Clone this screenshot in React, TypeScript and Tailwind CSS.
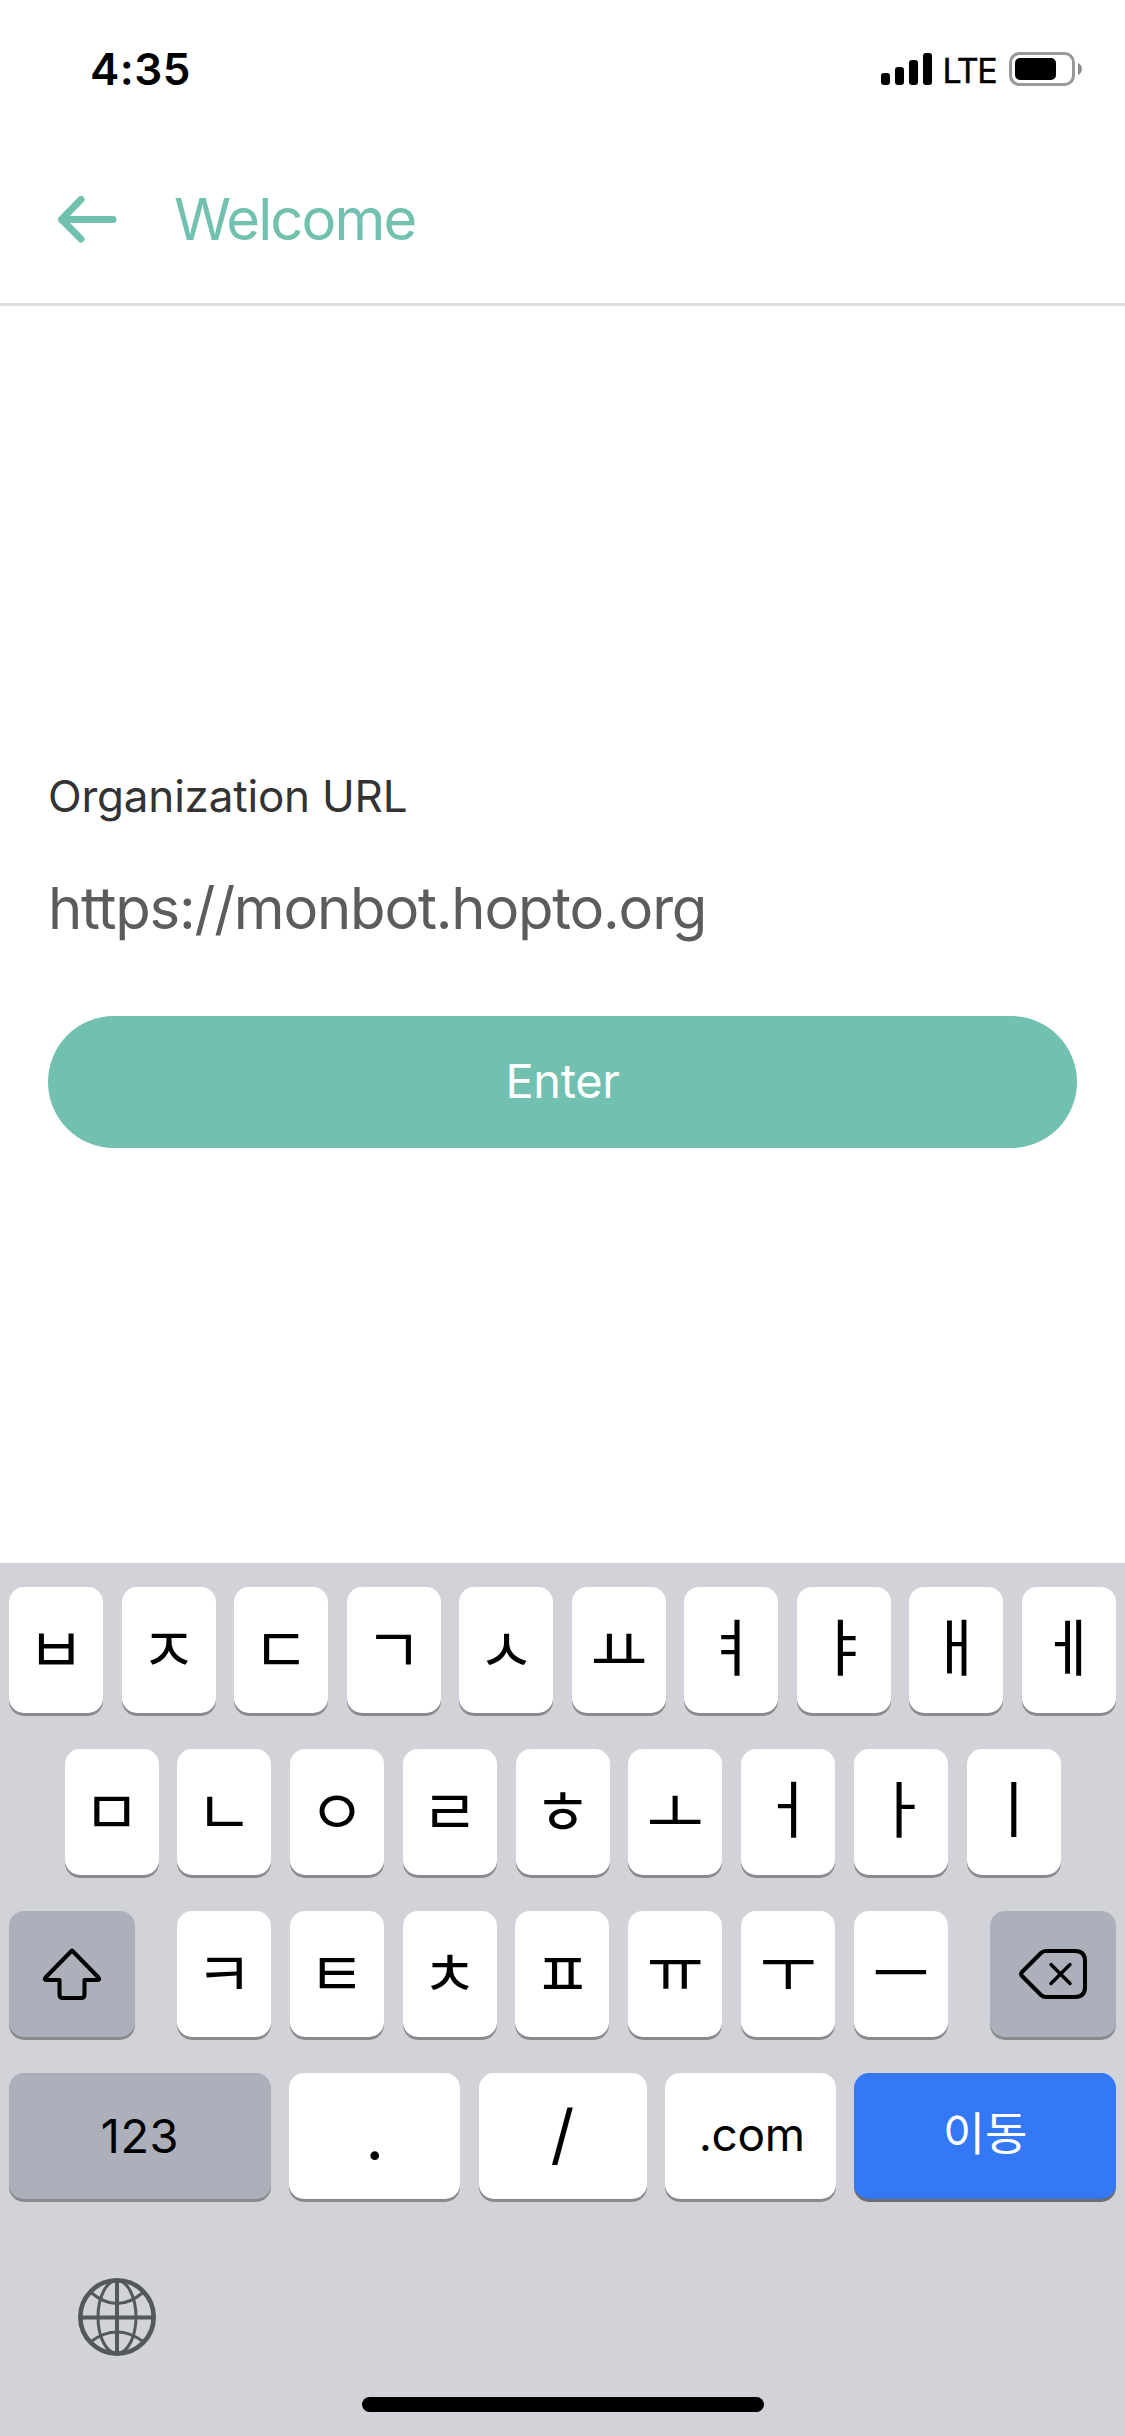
import type { ReactNode } from "react";

type Tone = "light" | "dark" | "blue";

const tones: Record<Tone, string> = {
  light: "bg-white text-black shadow-[0_3px_0_#898a8d]",
  dark: "bg-[#abb0bb] text-black shadow-[0_3px_0_#898a8d]",
  blue: "bg-[#3478f6] text-white shadow-[0_3px_0_#6b6d70]",
};

function Key({ children, width = "w-[94px]", tone = "light" }: { children: ReactNode; width?: string; tone?: Tone }) {
  return (
    <button className={`flex h-[126px] shrink-0 items-center justify-center rounded-[15px] ${width} ${tones[tone]}`}>
      {children}
    </button>
  );
}

const lift: Record<string, string> = {
  ㅛ: "pb-[6px]",
  ㅗ: "pb-[6px]",
  ㅠ: "pb-[16px]",
  ㅜ: "pb-[16px]",
  ㅕ: "pb-[12px]",
  ㅑ: "pb-[12px]",
  ㅐ: "pb-[12px]",
  ㅔ: "pb-[12px]",
  ㅓ: "pb-[12px]",
  ㅏ: "pb-[12px]",
  ㅣ: "pb-[12px]",
};

function Jamo({ children }: { children: string }) {
  return (
    <span className={`font-['Noto_Sans_CJK_KR',sans-serif] text-[62px] leading-[110px] ${lift[children] ?? "pb-[9px]"}`}>
      {children}
    </span>
  );
}

function SignalBars() {
  return (
    <div className="flex items-end gap-[5px]">
      <i className="h-[12px] w-[9px] rounded-[3px] bg-black" />
      <i className="h-[18px] w-[9px] rounded-[3px] bg-black" />
      <i className="h-[25px] w-[9px] rounded-[3px] bg-black" />
      <i className="h-[32px] w-[9px] rounded-[3px] bg-black" />
    </div>
  );
}

function Battery() {
  return (
    <svg width="74" height="34" viewBox="0 0 74 34" fill="none">
      <rect x="1.5" y="1.5" width="63" height="31" rx="9" stroke="#999" strokeWidth="3" />
      <rect x="6" y="6" width="41" height="22" rx="5" fill="#000" />
      <path d="M69 11c2.500 1 4 3.500 4 6s-1.500 5-4 6z" fill="#8c8c8c" />
    </svg>
  );
}

function ShiftIcon() {
  return (
    <svg width="60" height="54" viewBox="0 0 60 54" fill="none" stroke="#000" strokeWidth="4" strokeLinejoin="round">
      <path d="M30 3.500 3.500 30.500Q1.800 33 4.500 33H17.500V47.500Q17.500 51 21 51H39Q42.500 51 42.500 47.500V33H55.500Q58.200 33 56.500 30.500Z" />
    </svg>
  );
}

function DeleteIcon() {
  return (
    <svg width="68" height="50" viewBox="0 0 68 50" fill="none" stroke="#000" strokeWidth="4" strokeLinecap="round" strokeLinejoin="round">
      <path d="M27 2H56Q66 2 66 12V38Q66 48 56 48H27Q24 48 22 46L3 27Q1 25 3 23L22 4Q24 2 27 2Z" />
      <path d="M32 15.500 51 34.500M51 15.500 32 34.500" strokeWidth="3.400" />
    </svg>
  );
}

function GlobeIcon() {
  return (
    <svg width="78" height="78" viewBox="0 0 78 78" fill="none" stroke="#54575c">
      <circle cx="39" cy="39" r="36.700" strokeWidth="4.600" />
      <path d="M39 2V76M2 39.500H76" strokeWidth="4" />
      <ellipse cx="39" cy="39" rx="19" ry="36.500" strokeWidth="3" />
      <path d="M13 14.500Q39 36.500 65 14.500M13 63.500Q39 44.500 65 63.500" strokeWidth="3" />
    </svg>
  );
}

const row1 = ["ㅂ", "ㅈ", "ㄷ", "ㄱ", "ㅅ", "ㅛ", "ㅕ", "ㅑ", "ㅐ", "ㅔ"];
const row2 = ["ㅁ", "ㄴ", "ㅇ", "ㄹ", "ㅎ", "ㅗ", "ㅓ", "ㅏ", "ㅣ"];
const row3 = ["ㅋ", "ㅌ", "ㅊ", "ㅍ", "ㅠ", "ㅜ", "ㅡ"];

export default function App() {
  return (
    <div className="flex h-[2436px] w-[1125px] flex-col overflow-hidden bg-white font-['Inter',sans-serif]">
      <div className="flex h-[138px] shrink-0 items-center justify-between pr-[42px] pl-[90px]">
        <span className="text-[44px] font-semibold tracking-[0.5px]">4:35</span>
        <div className="flex items-center">
          <SignalBars />
          <span className="mr-[13px] ml-[10px] pt-[3px] text-[34px] leading-none tracking-[-1.6px] [-webkit-text-stroke:0.4px_black]">LTE</span>
          <Battery />
        </div>
      </div>

      <header className="flex h-[168px] shrink-0 items-center border-b-[3px] border-[#e0e0e0] pb-[3px] pl-[57px] text-[#71c0b0]">
        <svg width="60" height="48" viewBox="0 0 60 48" fill="none" stroke="currentColor" strokeWidth="7" strokeLinecap="round" strokeLinejoin="round">
          <path d="M24 4.500 4.500 24.500 24 44M4.500 24.500H56" />
        </svg>
        <h1 className="ml-[57px] text-[58px] leading-none tracking-[-1.9px]">Welcome</h1>
      </header>

      <main className="flex flex-1 flex-col px-[48px] pt-[466px]">
        <label className="h-[48px] text-[44px] leading-[48px] tracking-[-0.2px] text-[#333]">Organization URL</label>
        <div className="mt-[52px] h-[72px] text-[58px] leading-[72px] tracking-[-1.2px] text-[#5c5c5c]">https://monbot.hopto.org</div>
        <button className="mt-[72px] h-[132px] rounded-full bg-[#71c0b0] pb-[3px] text-[47px] leading-none tracking-[-0.4px] text-white">Enter</button>
      </main>

      <section className="flex h-[873px] shrink-0 flex-col bg-[#d1d3d9] px-[9px] pt-[24px]">
        <div className="flex flex-col gap-[36px]">
          <div className="flex justify-between">
            {row1.map((k) => <Key key={k}><Jamo>{k}</Jamo></Key>)}
          </div>
          <div className="flex justify-between px-[55.5px]">
            {row2.map((k) => <Key key={k}><Jamo>{k}</Jamo></Key>)}
          </div>
          <div className="flex justify-between">
            <Key width="w-[126px]" tone="dark"><ShiftIcon /></Key>
            <div className="flex w-[771px] justify-between">
              {row3.map((k) => <Key key={k}><Jamo>{k}</Jamo></Key>)}
            </div>
            <Key width="w-[126px]" tone="dark"><DeleteIcon /></Key>
          </div>
          <div className="flex justify-between">
            <Key width="w-[262px]" tone="dark"><span className="text-[47px] tracking-[0.5px]">123</span></Key>
            <Key width="w-[171px]"><span className="text-[66px]">.</span></Key>
            <Key width="w-[168px]"><span className="pb-[4px] text-[66px]">/</span></Key>
            <Key width="w-[171px]"><span className="pb-[3px] pl-[3px] text-[46px] tracking-[-0.3px]">.com</span></Key>
            <Key width="w-[262px]" tone="blue">
              <span className="pb-[11px] font-['Noto_Sans_CJK_KR',sans-serif] text-[46px]">이동</span>
            </Key>
          </div>
        </div>
        <div className="mt-[79px] ml-[69px]"><GlobeIcon /></div>
        <div className="mt-[41px] h-[15px] w-[402px] self-center rounded-full bg-black" />
      </section>
    </div>
  );
}
